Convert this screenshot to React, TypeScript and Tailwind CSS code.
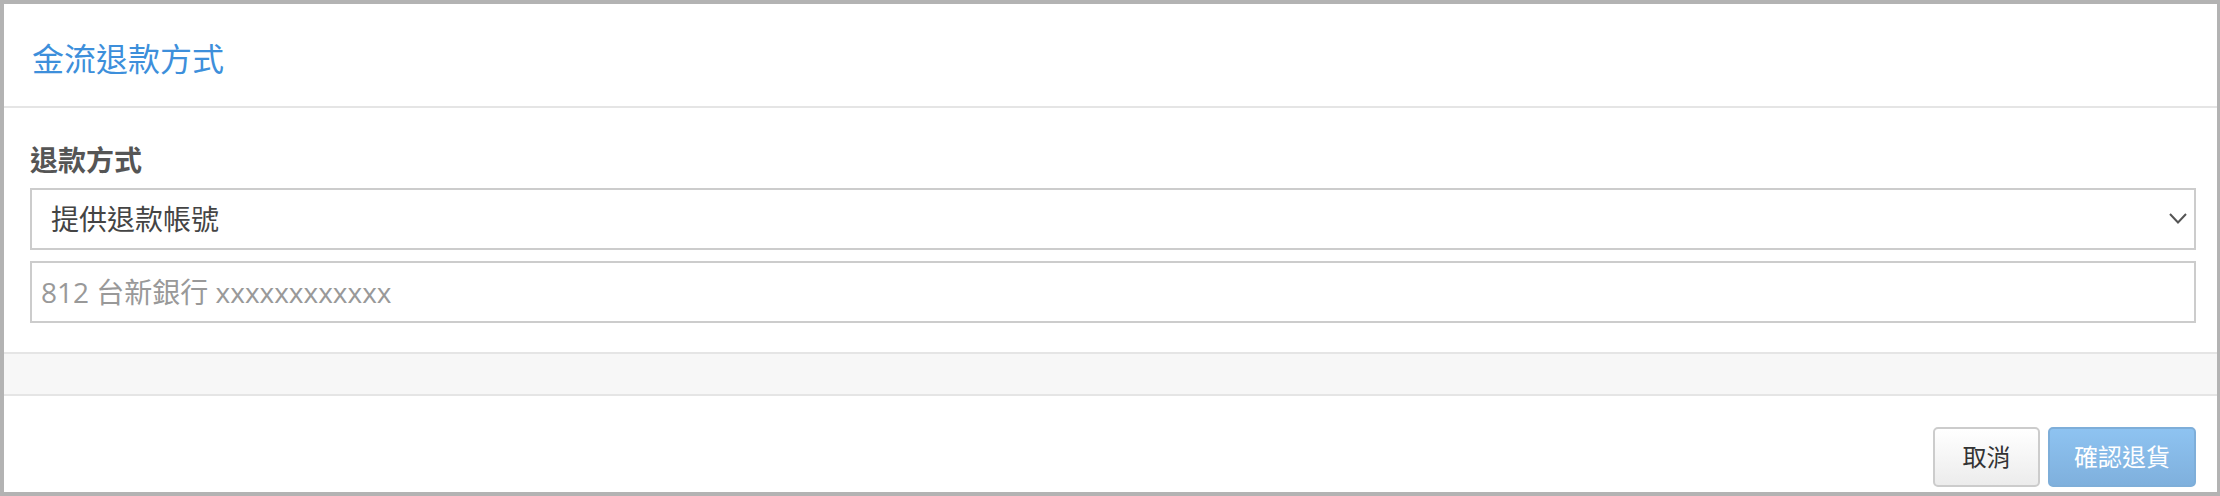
import { useState } from "react";

const font = "font-['Open_Sans','Noto_Sans_CJK_TC',sans-serif]";

const RefundModal = () => {
  const [method, setMethod] = useState("account");
  const [account, setAccount] = useState("");

  return (
    <div className={`flex h-[496px] w-full flex-col border-t-4 border-b-4 border-l-4 border-r-[3px] border-[#b3b3b3] bg-white ${font}`}>
      {/* Header */}
      <div className="flex h-[104px] shrink-0 items-center border-b-2 border-[#e5e5e5] pl-[28px] pt-[8px]">
        <h3 className="text-[32px] leading-none font-normal text-[#3d8fdb]">金流退款方式</h3>
      </div>

      {/* Body */}
      <div className="flex h-[246px] shrink-0 flex-col border-b-2 border-[#e5e5e5] pl-[26px] pr-[21px]">
        <label className="mt-[32px] mb-[8px] block h-[40px] text-[28px] leading-[40px] font-bold text-[#555]">退款方式</label>
        <div className="relative h-[62px]">
          <select
            value={method}
            onChange={(e) => setMethod(e.target.value)}
            className="h-full w-full appearance-none border-2 border-[#cccccc] bg-white pl-[19px] text-[28px] text-[#444] outline-none"
          >
            <option value="account">提供退款帳號</option>
          </select>
          <svg className="pointer-events-none absolute right-[9px] top-[25px]" width="18" height="11" viewBox="0 0 18 11">
            <polyline points="1,1 9,9.5 17,1" fill="none" stroke="#555" strokeWidth="2" />
          </svg>
        </div>
        <input
          value={account}
          onChange={(e) => setAccount(e.target.value)}
          placeholder="812 台新銀行 xxxxxxxxxxxx"
          className="mt-[11px] h-[62px] w-full border-2 border-[#cccccc] pl-[9px] text-[28px] text-[#555] outline-none placeholder:text-[#999]"
        />
      </div>

      {/* Spacer band */}
      <div className="h-[42px] shrink-0 border-b-2 border-[#e5e5e5] bg-[#f7f7f7]" />

      {/* Footer */}
      <div className="flex flex-1 items-start justify-end gap-[8px] pt-[31px] pr-[21px]">
        <button className="h-[60px] w-[107px] rounded-[5px] border-2 border-[#cccccc] bg-gradient-to-b from-white to-[#ececec] text-[24px] text-[#333]">
          取消
        </button>
        <button className="h-[60px] w-[148px] rounded-[5px] border-2 border-[#7eaed9] bg-gradient-to-b from-[#8ec3f1] to-[#7fb0dd] text-[24px] text-white">
          確認退貨
        </button>
      </div>
    </div>
  );
};

export default function App() {
  return <RefundModal />;
}
